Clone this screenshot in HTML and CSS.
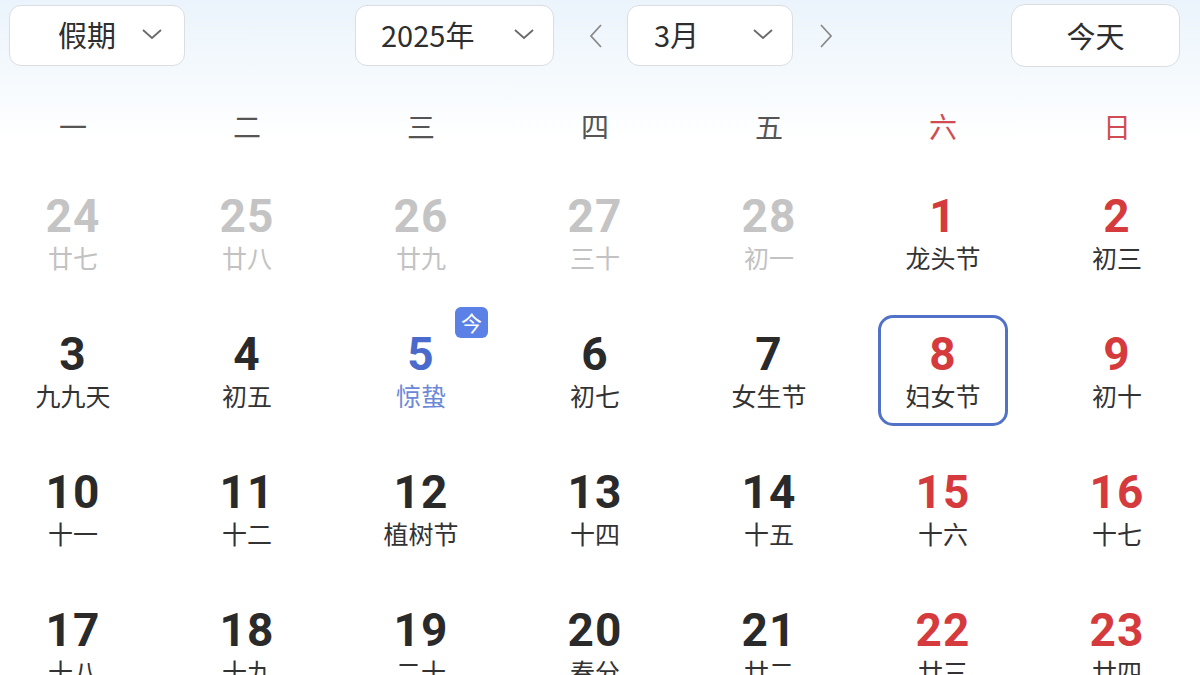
FILE: index.html
```html
<!DOCTYPE html>
<html lang="zh-CN">
<head>
    <meta charset="UTF-8">
    <meta name="viewport" content="width=device-width, initial-scale=1.0">
    <title>万年历</title>
    <link rel="stylesheet" href="styles.css">
</head>
<body>

    <!-- 顶部工具栏 -->
    <div class="toolbar">
        <div class="select select-holiday">
            <span class="select-label">假期</span>
            <svg class="chevron" viewBox="0 0 24 12"><polyline points="3,2 12,10 21,2"/></svg>
        </div>
        <div class="select select-year">
            <span class="select-label">2025年</span>
            <svg class="chevron" viewBox="0 0 24 12"><polyline points="3,2 12,10 21,2"/></svg>
        </div>
        <span class="nav-arrow nav-prev">
            <svg viewBox="0 0 16 26"><polyline points="13,2 3,13 13,24"/></svg>
        </span>
        <div class="select select-month">
            <span class="select-label">3月</span>
            <svg class="chevron" viewBox="0 0 24 12"><polyline points="3,2 12,10 21,2"/></svg>
        </div>
        <span class="nav-arrow nav-next">
            <svg viewBox="0 0 16 26"><polyline points="3,2 13,13 3,24"/></svg>
        </span>
        <button class="today-btn">今天</button>
    </div>

    <!-- 星期 -->
    <div class="weekdays">
        <div>一</div>
        <div>二</div>
        <div>三</div>
        <div>四</div>
        <div>五</div>
        <div class="weekend">六</div>
        <div class="weekend">日</div>
    </div>

    <!-- 日期 -->
    <div class="days">
        <div class="day other"><div class="day-box"><div class="num">24</div><div class="lunar">廿七</div></div></div>
        <div class="day other"><div class="day-box"><div class="num">25</div><div class="lunar">廿八</div></div></div>
        <div class="day other"><div class="day-box"><div class="num">26</div><div class="lunar">廿九</div></div></div>
        <div class="day other"><div class="day-box"><div class="num">27</div><div class="lunar">三十</div></div></div>
        <div class="day other"><div class="day-box"><div class="num">28</div><div class="lunar">初一</div></div></div>
        <div class="day weekend"><div class="day-box"><div class="num">1</div><div class="lunar">龙头节</div></div></div>
        <div class="day weekend"><div class="day-box"><div class="num">2</div><div class="lunar">初三</div></div></div>

        <div class="day"><div class="day-box"><div class="num">3</div><div class="lunar">九九天</div></div></div>
        <div class="day"><div class="day-box"><div class="num">4</div><div class="lunar">初五</div></div></div>
        <div class="day today"><div class="day-box"><span class="today-badge">今</span><div class="num">5</div><div class="lunar">惊蛰</div></div></div>
        <div class="day"><div class="day-box"><div class="num">6</div><div class="lunar">初七</div></div></div>
        <div class="day"><div class="day-box"><div class="num">7</div><div class="lunar">女生节</div></div></div>
        <div class="day weekend selected"><div class="day-box"><div class="num">8</div><div class="lunar">妇女节</div></div></div>
        <div class="day weekend"><div class="day-box"><div class="num">9</div><div class="lunar">初十</div></div></div>

        <div class="day"><div class="day-box"><div class="num">10</div><div class="lunar">十一</div></div></div>
        <div class="day"><div class="day-box"><div class="num">11</div><div class="lunar">十二</div></div></div>
        <div class="day"><div class="day-box"><div class="num">12</div><div class="lunar">植树节</div></div></div>
        <div class="day"><div class="day-box"><div class="num">13</div><div class="lunar">十四</div></div></div>
        <div class="day"><div class="day-box"><div class="num">14</div><div class="lunar">十五</div></div></div>
        <div class="day weekend"><div class="day-box"><div class="num">15</div><div class="lunar">十六</div></div></div>
        <div class="day weekend"><div class="day-box"><div class="num">16</div><div class="lunar">十七</div></div></div>

        <div class="day"><div class="day-box"><div class="num">17</div><div class="lunar">十八</div></div></div>
        <div class="day"><div class="day-box"><div class="num">18</div><div class="lunar">十九</div></div></div>
        <div class="day"><div class="day-box"><div class="num">19</div><div class="lunar">二十</div></div></div>
        <div class="day"><div class="day-box"><div class="num">20</div><div class="lunar">春分</div></div></div>
        <div class="day"><div class="day-box"><div class="num">21</div><div class="lunar">廿二</div></div></div>
        <div class="day weekend"><div class="day-box"><div class="num">22</div><div class="lunar">廿三</div></div></div>
        <div class="day weekend"><div class="day-box"><div class="num">23</div><div class="lunar">廿四</div></div></div>
    </div>

</body>
</html>
```

FILE: styles.css
```css
body {
    margin: 0;
    height: 675px;
    overflow: hidden;
    font-family: "Noto Sans CJK SC", "Noto Sans", sans-serif;
    color: #333;
    background: linear-gradient(#ebf4fc 0, #f4f9fd 70px, #ffffff 140px);
}

/* 工具栏 */
.toolbar {
    height: 71px;
    display: flex;
    align-items: center;
    padding: 0 20px 0 9px;
}

.select {
    height: 61px;
    box-sizing: border-box;
    display: flex;
    align-items: center;
    background-color: #fff;
    border: 1.5px solid #dadde2;
    border-radius: 12px;
    font-size: 29px;
    color: #2e2e2e;
}

.select-holiday {
    width: 176px;
    padding: 0 20px 3px 48px;
}

.select-year {
    width: 199px;
    margin-left: 170px;
    padding: 0 17px 3px 25px;
}

.select-month {
    width: 166px;
    padding: 0 17px 3px 26px;
}

.chevron {
    width: 24px;
    height: 12px;
    margin-left: auto;
    fill: none;
    stroke: #6a6a6a;
    stroke-width: 1.8;
}

.nav-arrow svg {
    display: block;
    width: 16px;
    height: 26px;
    fill: none;
    stroke: #8a8a8a;
    stroke-width: 1.8;
}

.nav-prev {
    margin: 0 23px 0 34px;
}

.nav-next {
    margin-left: 25px;
}

.today-btn {
    margin-left: auto;
    width: 169px;
    height: 63px;
    padding-bottom: 3px;
    background-color: #fff;
    border: 1.5px solid #dadde2;
    border-radius: 14px;
    font-family: inherit;
    font-size: 29px;
    color: #2e2e2e;
}

/* 星期 */
.weekdays {
    display: grid;
    grid-template-columns: repeat(7, 174px);
    margin-left: -14px;
    padding: 38px 0 20px;
    line-height: 34px;
    text-align: center;
    font-size: 28px;
    color: #555;
}

.weekdays .weekend {
    color: #cf4d52;
}

/* 日期格子 */
.days {
    display: grid;
    grid-template-columns: repeat(7, 174px);
    grid-auto-rows: 138px;
    margin-left: -14px;
}

.day {
    display: flex;
    align-items: center;
    justify-content: center;
}

.day-box {
    position: relative;
    width: 130px;
    height: 111px;
    box-sizing: border-box;
    border: 3px solid transparent;
    border-radius: 15px;
    display: flex;
    flex-direction: column;
    align-items: center;
    justify-content: center;
}

.num {
    font-family: Roboto, "DejaVu Sans", sans-serif;
    font-weight: 700;
    font-size: 46px;
    line-height: 44px;
    letter-spacing: 1px;
    color: #2a2a2a;
}

.lunar {
    margin-top: 5px;
    font-size: 25px;
    line-height: 28px;
    color: #333;
}

.day.weekend .num {
    color: #d53a3c;
}

.day.other .num {
    color: #c4c4c4;
}

.day.other .lunar {
    color: #c2c2c2;
}

.day.today .num {
    color: #4a6bcc;
}

.day.today .lunar {
    color: #6d88d8;
}

.day.selected .day-box {
    border-color: #5272c8;
}

.today-badge {
    position: absolute;
    top: -11px;
    right: -5px;
    width: 33px;
    height: 31px;
    border-radius: 6px;
    background-color: #5b80e6;
    color: #fff;
    font-size: 21px;
    line-height: 31px;
    text-align: center;
}
```
